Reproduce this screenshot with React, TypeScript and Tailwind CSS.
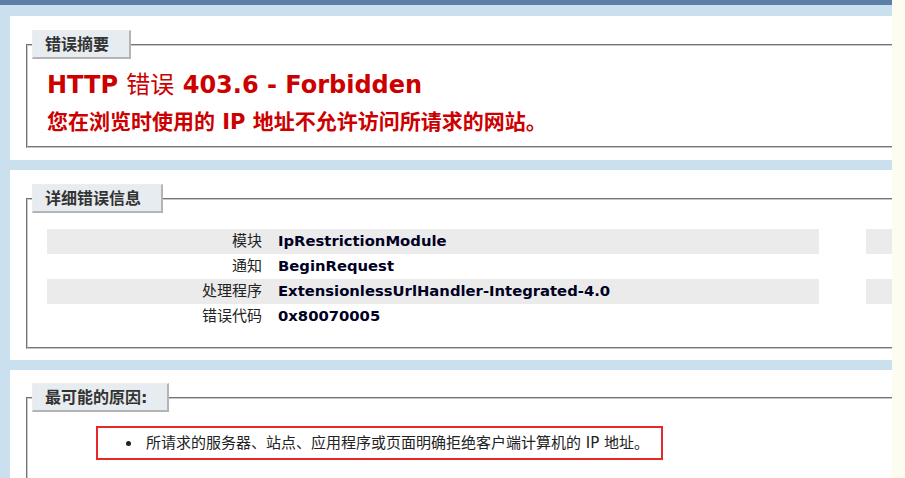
import React from "react";

const font = { fontFamily: '"DejaVu Sans", "Noto Sans CJK SC", sans-serif' };

function Legend({ children }: { children: React.ReactNode }) {
  return (
    <legend className="ml-[-15px] bg-[#e7ecf0] border-t border-l border-[#ededed] border-r-2 border-b-2 border-r-[#b4b4b4] border-b-[#b4b4b4] pl-[12px] pr-[20px] h-[29px] leading-[27px] text-[16px] font-bold text-[#333333]">
      {children}
    </legend>
  );
}

function Row({ label, value, shade }: { label: string; value: string; shade: boolean }) {
  return (
    <div className={`flex h-[25px] items-center ${shade ? "bg-[#ebebeb]" : ""}`}>
      <div className="w-[219px] shrink-0 text-right pr-[4px] text-[15px] text-[#222222]">{label}</div>
      <div className="pl-[12px] text-[14.8px] font-bold text-[#000022]">{value}</div>
    </div>
  );
}

export default function App() {
  const fs = "block w-[1000px] border-2 [border-style:groove] border-[#c8c8c8] pl-[19px] pr-[15px] m-0";
  return (
    <div className="w-[905px] h-[478px] overflow-hidden flex bg-[#fdfcf0]" style={font}>
      <div className="w-[892px] shrink-0 h-full overflow-hidden bg-[#cbe0ef] flex flex-col">
        <div className="h-[5px] shrink-0 bg-[#5b7fa6]" />
        {/* Panel 1 */}
        <div className="mt-[11px] ml-[10px] w-[1100px] shrink-0 bg-white pt-[14px] pl-[16px] pb-[12px]">
          <fieldset className={fs + " pb-[10px]"}>
            <Legend>错误摘要</Legend>
            <h2 className="mt-[11px] mb-[8px] text-[24px] leading-[30px] font-bold text-[#cc0000]">
              HTTP <span className="font-normal">错误</span> 403.6 - Forbidden
            </h2>
            <h3 className="text-[21px] leading-[28px] font-bold text-[#cc0000]">您在浏览时使用的 IP 地址不允许访问所请求的网站。</h3>
          </fieldset>
        </div>
        {/* Panel 2 */}
        <div className="mt-[10px] ml-[10px] w-[1100px] shrink-0 bg-white pt-[14px] pl-[16px] pb-[11px]">
          <fieldset className={fs + " pb-[18px]"}>
            <Legend>详细错误信息</Legend>
            <div className="mt-[16px] flex gap-[47px]">
              <div className="w-[772px] shrink-0">
                <Row label="模块" value="IpRestrictionModule" shade />
                <Row label="通知" value="BeginRequest" shade={false} />
                <Row label="处理程序" value="ExtensionlessUrlHandler-Integrated-4.0" shade />
                <Row label="错误代码" value="0x80070005" shade={false} />
              </div>
              <div className="w-[300px] shrink-0">
                <div className="h-[25px] bg-[#ebebeb]" />
                <div className="h-[25px]" />
                <div className="h-[25px] bg-[#ebebeb]" />
                <div className="h-[25px]" />
              </div>
            </div>
          </fieldset>
        </div>
        {/* Panel 3 */}
        <div className="mt-[10px] ml-[10px] w-[1100px] shrink-0 bg-white pt-[13px] pl-[16px] pb-[12px] flex-1">
          <fieldset className={fs + " pb-[20px]"}>
            <Legend>最可能的原因:</Legend>
            <div className="mt-[14px] ml-[49px] w-[567px] h-[34px] border-2 border-[#e8272b] flex items-center">
              <ul className="list-disc pl-[44px] text-[15px] text-[#222222]">
                <li className="pl-[4px]">所请求的服务器、站点、应用程序或页面明确拒绝客户端计算机的 IP 地址。</li>
              </ul>
            </div>
          </fieldset>
        </div>
      </div>
    </div>
  );
}
